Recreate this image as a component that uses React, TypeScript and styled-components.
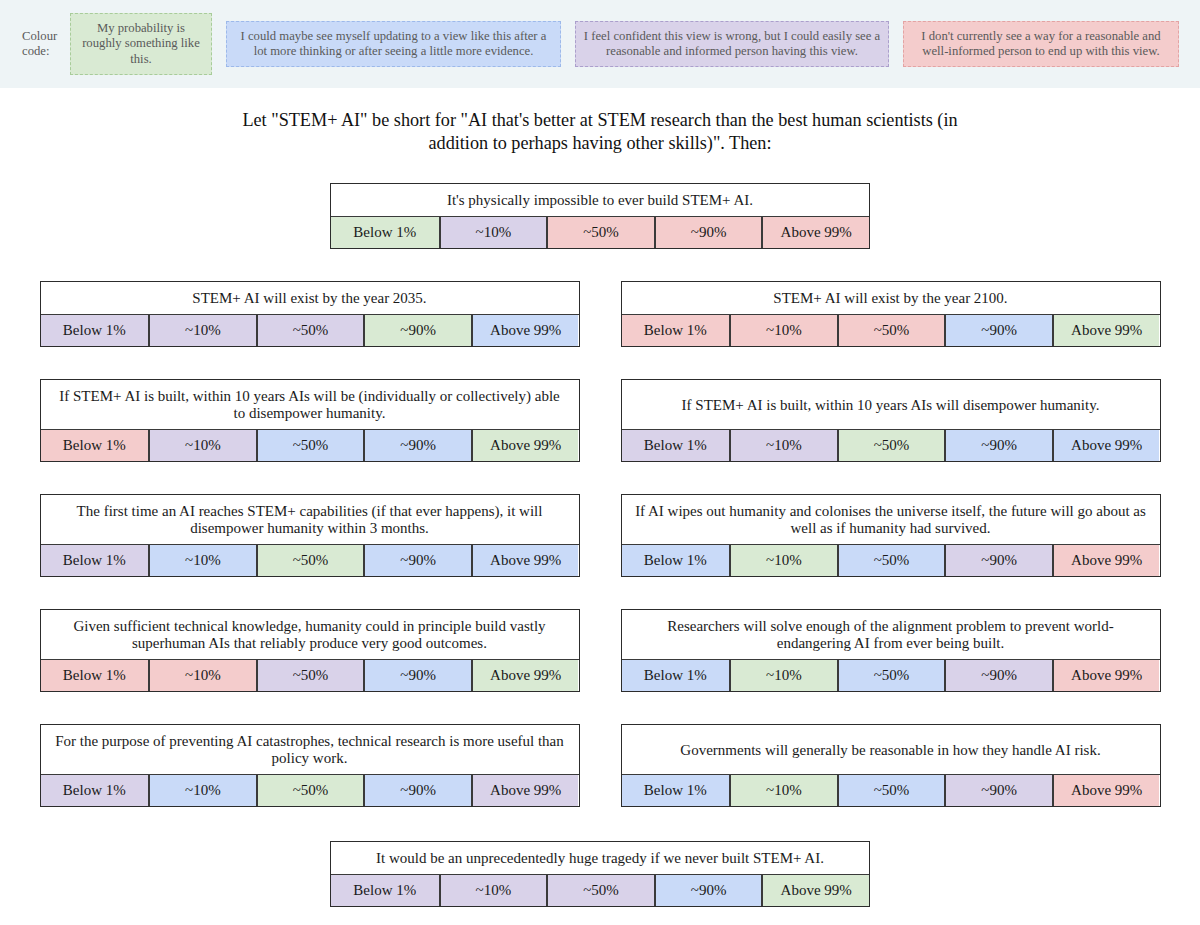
import React from 'react'
import styled, { createGlobalStyle } from 'styled-components'

type Tone = 'green' | 'blue' | 'purple' | 'red'

const fills: Record<Tone, string> = {
    green: '#d9ead3',
    blue: '#c9daf8',
    purple: '#d9d2e9',
    red: '#f4cccc',
}

const edges: Record<Tone, string> = {
    green: '#a8cc9a',
    blue: '#9db9ea',
    purple: '#ab9fcc',
    red: '#e3a3a3',
}

const LEVELS = ['Below 1%', '~10%', '~50%', '~90%', 'Above 99%']

const legend: { tone: Tone; width: number; pad: number; text: string }[] = [
    { tone: 'green', width: 142, pad: 9, text: 'My probability is roughly something like this.' },
    { tone: 'blue', width: 335, pad: 12, text: 'I could maybe see myself updating to a view like this after a lot more thinking or after seeing a little more evidence.' },
    { tone: 'purple', width: 314, pad: 4, text: 'I feel confident this view is wrong, but I could easily see a reasonable and informed person having this view.' },
    { tone: 'red', width: 276, pad: 4, text: "I don't currently see a way for a reasonable and well-informed person to end up with this view." },
]

type Claim = { title: string; tones: Tone[] }

const topClaim: Claim = {
    title: "It's physically impossible to ever build STEM+ AI.",
    tones: ['green', 'purple', 'red', 'red', 'red'],
}

const claims: Claim[] = [
    { title: 'STEM+ AI will exist by the year 2035.', tones: ['purple', 'purple', 'purple', 'green', 'blue'] },
    { title: 'STEM+ AI will exist by the year 2100.', tones: ['red', 'red', 'red', 'blue', 'green'] },
    { title: 'If STEM+ AI is built, within 10 years AIs will be (individually or collectively) able to disempower humanity.', tones: ['red', 'purple', 'blue', 'blue', 'green'] },
    { title: 'If STEM+ AI is built, within 10 years AIs will disempower humanity.', tones: ['purple', 'purple', 'green', 'blue', 'blue'] },
    { title: 'The first time an AI reaches STEM+ capabilities (if that ever happens), it will disempower humanity within 3 months.', tones: ['purple', 'blue', 'green', 'blue', 'blue'] },
    { title: 'If AI wipes out humanity and colonises the universe itself, the future will go about as well as if humanity had survived.', tones: ['blue', 'green', 'blue', 'purple', 'red'] },
    { title: 'Given sufficient technical knowledge, humanity could in principle build vastly superhuman AIs that reliably produce very good outcomes.', tones: ['red', 'red', 'purple', 'blue', 'green'] },
    { title: 'Researchers will solve enough of the alignment problem to prevent world-endangering AI from ever being built.', tones: ['blue', 'green', 'blue', 'purple', 'red'] },
    { title: 'For the purpose of preventing AI catastrophes, technical research is more useful than policy work.', tones: ['purple', 'blue', 'green', 'blue', 'purple'] },
    { title: 'Governments will generally be reasonable in how they handle AI risk.', tones: ['blue', 'green', 'blue', 'purple', 'red'] },
]

const bottomClaim: Claim = {
    title: 'It would be an unprecedentedly huge tragedy if we never built STEM+ AI.',
    tones: ['purple', 'purple', 'purple', 'blue', 'green'],
}

const ClaimCard: React.FC<{ claim: Claim; $top?: number }> = ({ claim, $top }) => (
    <Card $top={$top}>
        <Title>{claim.title}</Title>
        <Options>
            {LEVELS.map((label, i) => (
                <Option key={label} $tone={claim.tones[i]}>{label}</Option>
            ))}
        </Options>
    </Card>
)

const App: React.FC = () => {
    return (
        <>
            <GlobalStyle />
            <Header>
                <LegendLabel>Colour code:</LegendLabel>
                {legend.map((item) => (
                    <LegendBox key={item.tone} $tone={item.tone} $width={item.width} $pad={item.pad}>
                        {item.text}
                    </LegendBox>
                ))}
            </Header>
            <Intro>
                Let "STEM+ AI" be short for "AI that's better at STEM research than the best human scientists (in
                addition to perhaps having other skills)". Then:
            </Intro>
            <ClaimCard claim={topClaim} $top={28} />
            <Grid>
                {claims.map((c) => (
                    <ClaimCard key={c.title} claim={c} />
                ))}
            </Grid>
            <ClaimCard claim={bottomClaim} $top={34} />
        </>
    )
}

const GlobalStyle = createGlobalStyle`
    body {
        margin : 0;
        background : #ffffff;
        font-family : "Liberation Serif", "Times New Roman", serif;
        color : #1a1a1a;
    }
`

const Header = styled.div`
    height : 88px;
    background : #eef4f6;
    display : flex;
    align-items : center;
    padding-left : 22px;
    gap : 14px;
`

const LegendLabel = styled.div`
    width : 40px;
    margin-right : -6px;
    font-size : 12.7px;
    line-height : 15.5px;
    color : #5a5a5a;
`

const LegendBox = styled.div<{ $tone: Tone; $width: number; $pad: number }>`
    box-sizing : border-box;
    width : ${(p) => p.$width}px;
    padding : 6.5px ${(p) => p.$pad}px;
    background : ${(p) => fills[p.$tone]};
    border : 1.5px dashed ${(p) => edges[p.$tone]};
    font-size : 12.7px;
    line-height : 15.5px;
    color : #5a5a5a;
    text-align : center;
`

const Intro = styled.p`
    max-width : 745px;
    margin : 0 auto;
    padding-top : 21px;
    font-size : 18.2px;
    line-height : 23px;
    text-align : center;
    color : #111;
`

const Card = styled.div<{ $top?: number }>`
    box-sizing : border-box;
    width : 540px;
    display : flex;
    flex-direction : column;
    border : 1px solid #2c2c2c;
    ${(p) => p.$top !== undefined && `margin : ${p.$top}px auto 0;`}
`

const Title = styled.div`
    flex : 1;
    display : flex;
    align-items : center;
    justify-content : center;
    padding : 8px 12px 7px;
    font-size : 15px;
    line-height : 17px;
    text-align : center;
    background : #ffffff;
`

const Options = styled.div`
    display : grid;
    grid-template-columns : repeat(5, 1fr);
    border-top : 1.5px solid #3a3a3a;
`

const Option = styled.div<{ $tone: Tone }>`
    padding : 7px 0;
    font-size : 15px;
    line-height : 17px;
    text-align : center;
    background : ${(p) => fills[p.$tone]};
    border-left : 2px solid #3a3a3a;
    &:first-child {
        border-left : none;
    }
`

const Grid = styled.div`
    width : 1121px;
    margin : 32px auto 0;
    display : grid;
    grid-template-columns : 540px 540px;
    column-gap : 41px;
    row-gap : 32px;
`

export default App
